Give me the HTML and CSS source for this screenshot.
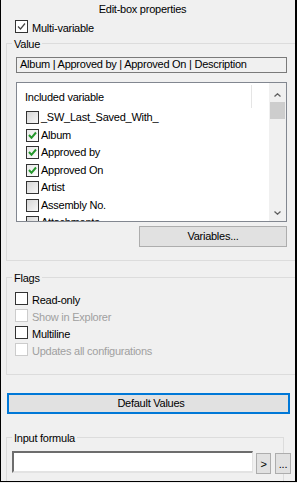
FILE: index.html
```html
<!DOCTYPE html>
<html lang="en">

<head>
    <meta charset="UTF-8">
    <meta name="viewport" content="width=device-width, initial-scale=1.0">
    <title>Edit-box properties</title>
    <link rel="stylesheet" href="styles.css">
</head>

<body>
    <div class="panel">
        <div class="title">Edit-box properties</div>

        <div class="check">
            <span class="box">
                <svg width="11" height="11" viewBox="0 0 11 11"><polyline points="2,5.5 4.5,8 9,2.5" fill="none" stroke="#444" stroke-width="1.2"/></svg>
            </span>
            <span class="check-text">Multi-variable</span>
        </div>

        <!-- Value group -->
        <fieldset class="group group-value">
            <legend>Value</legend>
            <div class="group-body">
                <div class="readonly-field">Album | Approved by | Approved On | Description</div>

                <div class="listbox">
                    <div class="list-main">
                        <div class="list-head">
                            <span class="head-cell">Included variable</span>
                            <span class="head-sep"></span>
                        </div>
                        <div class="list-row"><span class="lbox"></span><span>_SW_Last_Saved_With_</span></div>
                        <div class="list-row"><span class="lbox on"><svg width="11" height="11" viewBox="0 0 11 11"><polyline points="2,5 4.5,7.8 9,2.5" fill="none" stroke="#23962a" stroke-width="2"/></svg></span><span>Album</span></div>
                        <div class="list-row"><span class="lbox on"><svg width="11" height="11" viewBox="0 0 11 11"><polyline points="2,5 4.5,7.8 9,2.5" fill="none" stroke="#23962a" stroke-width="2"/></svg></span><span>Approved by</span></div>
                        <div class="list-row"><span class="lbox on"><svg width="11" height="11" viewBox="0 0 11 11"><polyline points="2,5 4.5,7.8 9,2.5" fill="none" stroke="#23962a" stroke-width="2"/></svg></span><span>Approved On</span></div>
                        <div class="list-row"><span class="lbox"></span><span>Artist</span></div>
                        <div class="list-row"><span class="lbox"></span><span>Assembly No.</span></div>
                        <div class="list-row"><span class="lbox"></span><span>Attachments</span></div>
                    </div>
                    <div class="scrollbar">
                        <div class="sb-up">
                            <svg width="7" height="4" viewBox="0 0 7 4"><polyline points="0.5,3.5 3.5,0.8 6.5,3.5" fill="none" stroke="#606060" stroke-width="1.3"/></svg>
                        </div>
                        <div class="sb-thumb"></div>
                        <div class="sb-track"></div>
                        <div class="sb-down">
                            <svg width="7" height="4" viewBox="0 0 7 4"><polyline points="0.5,0.5 3.5,3.2 6.5,0.5" fill="none" stroke="#606060" stroke-width="1.3"/></svg>
                        </div>
                    </div>
                </div>

                <div class="btn-row">
                    <button class="btn btn-variables">Variables...</button>
                </div>
            </div>
        </fieldset>

        <!-- Flags group -->
        <fieldset class="group group-flags">
            <legend>Flags</legend>
            <div class="group-body flags-body">
                <div class="check"><span class="box"></span><span class="check-text">Read-only</span></div>
                <div class="check disabled"><span class="box"></span><span class="check-text">Show in Explorer</span></div>
                <div class="check"><span class="box"></span><span class="check-text">Multiline</span></div>
                <div class="check disabled"><span class="box"></span><span class="check-text">Updates all configurations</span></div>
            </div>
        </fieldset>

        <button class="btn btn-default">Default Values</button>

        <!-- Input formula group -->
        <fieldset class="group group-formula">
            <legend>Input formula</legend>
            <div class="group-body formula-body">
                <div class="formula-input"></div>
                <button class="btn btn-small btn-arrow">&gt;</button>
                <button class="btn btn-small btn-dots">...</button>
            </div>
        </fieldset>
    </div>
</body>

</html>
```

FILE: styles.css
```css
/* Dialog panel */
body {
    margin: 0;
    padding: 0;
    background: #f0f0f0;
    font-family: "Liberation Sans", Arial, sans-serif;
    font-size: 11px;
    letter-spacing: -0.25px;
    color: #000;
}

.panel {
    box-sizing: border-box;
    width: 297px;
    height: 482px;
    background: #f0f0f0;
    border-left: 1px solid #000;
    border-right: 2px solid #000;
    border-bottom: 1px solid #000;
    overflow: hidden;
}

.title {
    height: 20px;
    box-sizing: border-box;
    padding: 3px 11px 0 0;
    line-height: 13px;
    text-align: center;
}

/* Checkboxes */
.check {
    display: flex;
    align-items: flex-start;
    gap: 4px;
    margin-left: 14px;
}

.check .box {
    width: 13px;
    height: 13px;
    box-sizing: border-box;
    border: 1px solid #333;
    background: #fff;
    display: flex;
    align-items: center;
    justify-content: center;
}

.check-text {
    line-height: 13px;
    padding-top: 2px;
}

.check.disabled .box {
    border-color: #cccccc;
}

.check.disabled .check-text {
    color: #a0a0a0;
}

/* Group boxes */
.group {
    margin: 0 0 0 5px;
    padding: 0;
    border: 1px solid #dcdcdc;
    min-inline-size: 0;
}

.group legend {
    margin-left: 5px;
    padding: 2px 2px 0 2px;
    line-height: 13px;
}

.group-value {
    width: 289px;
    margin-top: 1px;
}

.group-value .group-body {
    padding: 6px 9px 13px 9px;
}

.readonly-field {
    height: 16px;
    box-sizing: border-box;
    border: 1px solid #7a7a7a;
    background: #f0f0f0;
    padding-left: 3px;
    line-height: 13px;
    white-space: nowrap;
}

/* List with checkboxes */
.listbox {
    margin-top: 9px;
    height: 140px;
    box-sizing: border-box;
    border: 1px solid #828790;
    background: #fff;
    display: flex;
}

.list-main {
    flex: 1;
    overflow: hidden;
}

.list-head {
    display: flex;
    height: 26px;
}

.head-cell {
    width: 226px;
    padding: 8px 0 0 8px;
    line-height: 13px;
}

.head-sep {
    width: 1px;
    height: 23px;
    margin-top: 2px;
    background: #e5e5e5;
}

.list-row {
    display: flex;
    align-items: flex-start;
    gap: 2px;
    height: 17.5px;
    padding-left: 9px;
    white-space: nowrap;
}

.list-row span:last-child {
    line-height: 13px;
    padding-top: 2px;
}

.lbox {
    width: 13px;
    height: 13px;
    margin-top: 2px;
    box-sizing: border-box;
    border: 1px solid #333;
    background: linear-gradient(135deg, #d6d6d6, #f7f7f7);
    display: flex;
    align-items: center;
    justify-content: center;
}

.lbox.on {
    background: linear-gradient(135deg, #e8e8e8, #fdfdfd);
}

.scrollbar {
    width: 17px;
    background: #f0f0f0;
    display: flex;
    flex-direction: column;
}

.sb-up {
    height: 19px;
    box-sizing: border-box;
    display: flex;
    align-items: flex-end;
    justify-content: center;
    padding-bottom: 5px;
}

.sb-thumb {
    height: 17px;
    margin: 0 1px;
    background: #cdcdcd;
}

.sb-track {
    flex: 1;
}

.sb-down {
    height: 17px;
    box-sizing: border-box;
    display: flex;
    align-items: flex-start;
    justify-content: center;
    padding-top: 7px;
}

/* Buttons */
.btn {
    font-family: inherit;
    font-size: 11px;
    letter-spacing: -0.25px;
    color: #000;
    background: #e1e1e1;
    border: 1px solid #adadad;
    padding: 0;
    margin: 0;
    line-height: 19px;
    height: 21px;
    box-sizing: border-box;
}

.btn-row {
    display: flex;
    justify-content: flex-end;
    margin-top: 4px;
}

.btn-variables {
    width: 148px;
}

.btn-default {
    display: block;
    width: 283px;
    margin: 18px 0 0 6px;
    padding-left: 5px;
    border: 2px solid #0078d7;
    line-height: 17px;
}

/* Flags */
.group-flags {
    width: 289px;
    margin-top: 9px;
}

.flags-body {
    padding: 7px 0 16px 0;
    display: flex;
    flex-direction: column;
    gap: 2px;
}

.flags-body .check {
    margin-left: 8px;
}

/* Input formula */
.group-formula {
    width: 276px;
    margin-top: 16px;
}

.formula-body {
    display: flex;
    align-items: flex-start;
    padding: 6px 0 12px 5px;
    width: 279px;
}

.formula-input {
    width: 241px;
    height: 22px;
    box-sizing: border-box;
    background: #fff;
    border-style: solid;
    border-width: 2px 1px 2px 2px;
    border-color: #6d6d6d #e3e3e3 #e3e3e3 #6d6d6d;
}

.btn-small {
    margin-top: 2px;
    line-height: 21px;
}

.btn-arrow {
    width: 15px;
    margin-left: 3px;
}

.btn-dots {
    width: 16px;
    margin-left: 4px;
}
```
